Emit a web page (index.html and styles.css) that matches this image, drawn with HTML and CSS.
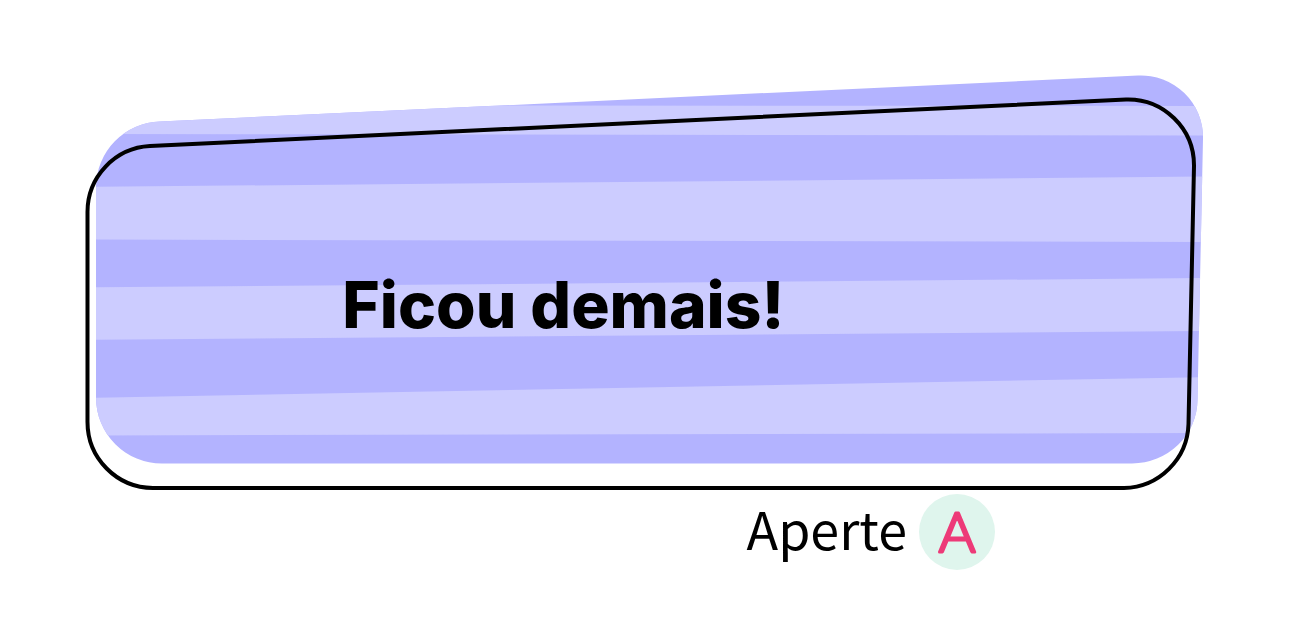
FILE: index.html
```html
<!DOCTYPE html>
<html lang="pt-BR">
<head>
  <meta charset="utf-8">
  <meta name="viewport" content="width=device-width, initial-scale=1">
  <title>Ficou demais!</title>
  <link rel="stylesheet" href="styles.css">
</head>
<body>
  <main class="screen">
    <section class="card">
      <svg class="card-art" viewBox="85 75 1119 415" aria-hidden="true">
        <defs>
          <clipPath id="panel">
            <path d="M96 187A66 66 0 0 1 160 121.500L1138 75.500A62 62 0 0 1 1203 139L1197.500 400A66 64 0 0 1 1132 463.500H162A66 66 0 0 1 96 397.500Z"/>
          </clipPath>
        </defs>
        <g clip-path="url(#panel)">
          <path class="stripe-dark" d="M80 70H1210V470H80Z"/>
          <path class="stripe-light" d="M80 70H490V105.500L1210 106V135.500L80 134Z"/>
          <path class="stripe-light" d="M80 187L1210 176.500V242L80 239.500Z"/>
          <path class="stripe-light" d="M80 287.500L1210 278V331L80 340Z"/>
          <path class="stripe-light" d="M80 398L1210 377V433L80 435.500Z"/>
        </g>
        <path class="outline" d="M87.500 212A66 66 0 0 1 150 146L1126 99.500A66 66 0 0 1 1194 166L1188.500 424A66 66 0 0 1 1124 488H153A66 66 0 0 1 87.500 422Z"/>
      </svg>
      <h1 class="message">Ficou demais!</h1>
    </section>
    <div class="prompt">
      <span id="prompt-label" class="prompt-label">Aperte</span>
      <button class="key" type="button" aria-labelledby="prompt-label key-letter">
        <svg class="key-face" viewBox="0 0 76 76">
          <text id="key-letter" class="key-letter" x="38" y="58">A</text>
        </svg>
      </button>
    </div>
  </main>
</body>
</html>
```
FILE: styles.css
```css
body {
  margin: 0;
  background: #fff;
  color: #000;
}

.screen {
  padding: 75px 86px 0 85px;
}

.card {
  display: grid;
  align-items: center;
}

.card-art,
.message {
  grid-area: 1 / 1;
}

.card-art {
  display: block;
  width: 100%;
}

.stripe-dark {
  fill: #b3b3ff;
}

.stripe-light {
  fill: #ccccff;
}

.outline {
  fill: none;
  stroke: #000;
  stroke-width: 4;
}

.message {
  margin: 0;
  padding: 44px 0 0 23%;
  font: 800 64px/80px Inter, sans-serif;
}

.prompt {
  display: flex;
  align-items: flex-start;
  justify-content: flex-end;
  gap: 12px;
  padding: 4px 209px 0 0;
}

.prompt-label {
  font: 400 52px/68px "Noto Sans CJK SC", "Open Sans", sans-serif;
}

.key {
  width: 76px;
  height: 76px;
  padding: 0;
  border: 0;
  border-radius: 50%;
  background: #dff5ed;
  cursor: pointer;
}

.key-face {
  display: block;
  width: 100%;
}

.key-letter {
  fill: #ed3a78;
  stroke: #ed3a78;
  stroke-width: 3;
  stroke-linejoin: round;
  font: 300 56px Lato, sans-serif;
  text-anchor: middle;
}
```
